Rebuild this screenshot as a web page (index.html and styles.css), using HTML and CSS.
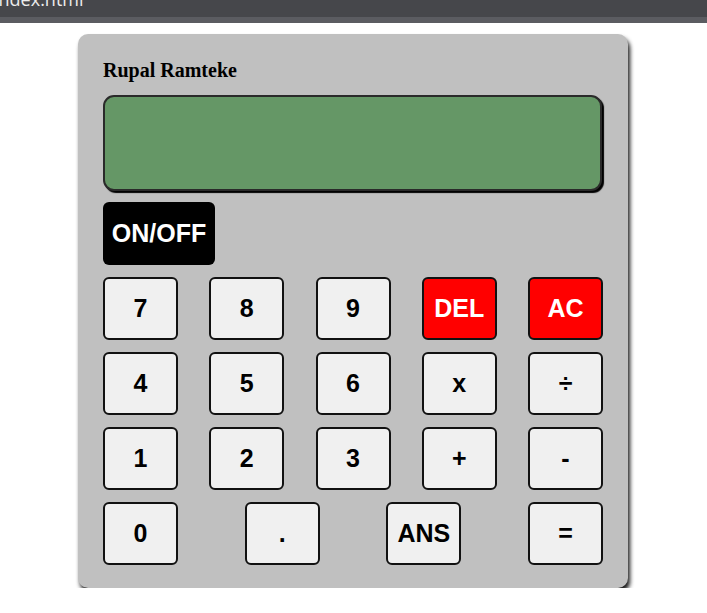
FILE: index.html
```html
<!DOCTYPE html>
<html>
<head>
<meta charset="utf-8">
<link rel="stylesheet" href="styles.css">
</head>
<body>
<div class="tabbar"><span class="tabtitle">index.html</span></div>
<div class="tabstrip"></div>
<div class="calculator">
  <div class="name">Rupal Ramteke</div>
  <div class="display"></div>
  <div class="power-row"><button class="btn power">ON/OFF</button></div>
  <div class="row">
    <button class="btn">7</button>
    <button class="btn">8</button>
    <button class="btn">9</button>
    <button class="btn red">DEL</button>
    <button class="btn red">AC</button>
  </div>
  <div class="row">
    <button class="btn">4</button>
    <button class="btn">5</button>
    <button class="btn">6</button>
    <button class="btn">x</button>
    <button class="btn">÷</button>
  </div>
  <div class="row">
    <button class="btn">1</button>
    <button class="btn">2</button>
    <button class="btn">3</button>
    <button class="btn">+</button>
    <button class="btn">-</button>
  </div>
  <div class="row">
    <button class="btn">0</button>
    <button class="btn">.</button>
    <button class="btn">ANS</button>
    <button class="btn">=</button>
  </div>
</div>
</body>
</html>
```
FILE: styles.css
```css
html, body {
  margin: 0;
  padding: 0;
  background: #ffffff;
}

.tabbar {
  height: 17px;
  background: #46474b;
  overflow: hidden;
}

.tabtitle {
  display: block;
  margin-top: -12px;
  margin-left: -6px;
  font-family: "Open Sans", "DejaVu Sans", sans-serif;
  font-size: 18px;
  line-height: 22px;
  color: #ececec;
  white-space: nowrap;
}

.tabstrip {
  height: 6px;
  background: #5b5c61;
}

.calculator {
  box-sizing: border-box;
  width: 550px;
  height: 554px;
  margin: 11px 0 0 78px;
  padding: 25px 25px 23px 25px;
  background: #c0c0c0;
  border-radius: 10px;
  box-shadow: 2px 4px 4px rgba(0, 0, 0, 0.9);
}

.name {
  font-family: "Liberation Serif", "Times New Roman", serif;
  font-weight: bold;
  font-size: 20px;
  line-height: 23px;
  color: #000;
  height: 23px;
}

.display {
  box-sizing: border-box;
  height: 96px;
  width: 499px;
  margin-top: 13px;
  background: #659766;
  border: 2px solid #2a2a2a;
  border-radius: 11px;
  box-shadow: 2px 2px 1px #000;
}

.power-row {
  display: flex;
  margin-top: 11px;
}

.row {
  display: flex;
  justify-content: space-between;
  margin-top: 12px;
}

.btn {
  box-sizing: border-box;
  width: 75px;
  height: 63px;
  padding: 0;
  margin: 0;
  background: #f0f0f0;
  border: 2px solid #111;
  border-radius: 6px;
  font-family: "Liberation Sans", Arial, sans-serif;
  font-weight: bold;
  font-size: 25px;
  color: #000;
}

.btn.red {
  background: #ff0000;
  color: #ffffff;
}

.btn.power {
  width: 112px;
  background: #000;
  color: #fff;
  border: none;
  border-radius: 6px;
}
```
